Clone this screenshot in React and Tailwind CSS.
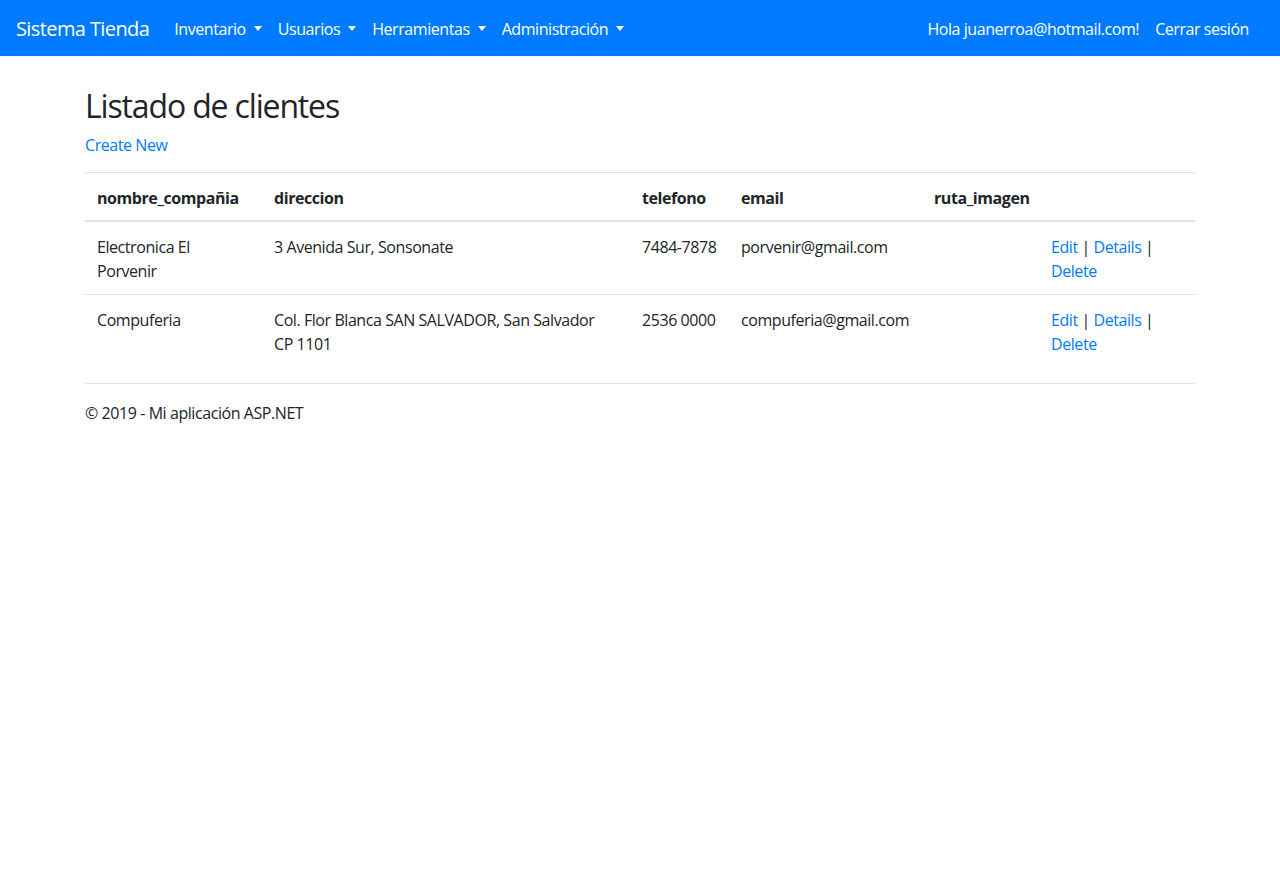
import React from "react";

const font = { fontFamily: '"Segoe UI", "Open Sans", sans-serif' };

function Caret() {
  return (
    <span className="inline-block ml-[8px] align-[4px] w-0 h-0 border-t-[5px] border-t-white border-x-[4px] border-x-transparent"></span>
  );
}

const rows = [
  {
    n: "Electronica El Porvenir",
    d: "3 Avenida Sur, Sonsonate",
    t: "7484-7878",
    e: "porvenir@gmail.com",
  },
  {
    n: "Compuferia",
    d: "Col. Flor Blanca SAN SALVADOR, San Salvador CP\u00a01101",
    t: "2536 0000",
    e: "compuferia@gmail.com",
  },
];

const td = "px-[12px] pt-[13px] pb-[11px] align-top border-t border-[#dee2e6]";

export default function App() {
  return (
    <div className="min-h-[888px] bg-white text-[#212529] text-[16px] leading-[24px] tracking-[-0.027em]" style={font}>
      <nav className="h-[56px] bg-[#007bff] flex items-center pl-[16px] pr-[23px] text-white">
        <span className="text-[20px] leading-[30px] mr-[17px] pt-[2px] tracking-[-0.03em]">Sistema Tienda</span>
        <div className="flex pt-[2px]">
          {["Inventario", "Usuarios", "Herramientas", "Administración"].map((x) => (
            <span key={x} className="px-[8px] py-[8px]">
              {x}
              <Caret />
            </span>
          ))}
        </div>
        <div className="ml-auto flex pt-[2px]">
          <span className="px-[8px] py-[8px]">Hola juanerroa@hotmail.com!</span>
          <span className="px-[8px] py-[8px]">Cerrar sesión</span>
        </div>
      </nav>
      <div className="w-[1110px] mx-auto">
        <h2 className="text-[32px] leading-[38px] font-normal mt-[31px] mb-[8px] tracking-[-0.036em]">Listado de clientes</h2>
        <p className="mb-[15px]">
          <a className="text-[#007bff]">Create New</a>
        </p>
        <table className="w-full table-fixed border-collapse mb-[16px]">
          <colgroup>
            <col className="w-[177px]" />
            <col className="w-[368px]" />
            <col className="w-[99px]" />
            <col className="w-[193px]" />
            <col className="w-[117px]" />
            <col className="w-[156px]" />
          </colgroup>
          <thead>
            <tr>
              {["nombre_compañia", "direccion", "telefono", "email", "ruta_imagen", ""].map((h, i) => (
                <th key={i} className="text-left font-bold p-[12px] pt-[13px] pb-[10px] align-bottom border-t border-t-[#dee2e6] border-b-2 border-b-[#dee2e6]">
                  {h}
                </th>
              ))}
            </tr>
          </thead>
          <tbody>
            {rows.map((r, i) => (
              <tr key={i}>
                <td className={td}>{r.n}</td>
                <td className={td}>{r.d}</td>
                <td className={td}>{r.t}</td>
                <td className={td}>{r.e}</td>
                <td className={td}></td>
                <td className={td}>
                  <a className="text-[#007bff]">Edit</a> | <a className="text-[#007bff]">Details</a> |{" "}
                  <a className="text-[#007bff]">Delete</a>
                </td>
              </tr>
            ))}
          </tbody>
        </table>
        <footer className="border-t border-[#dee2e6] leading-[58px]">© 2019 - Mi aplicación ASP.NET</footer>
      </div>
    </div>
  );
}
